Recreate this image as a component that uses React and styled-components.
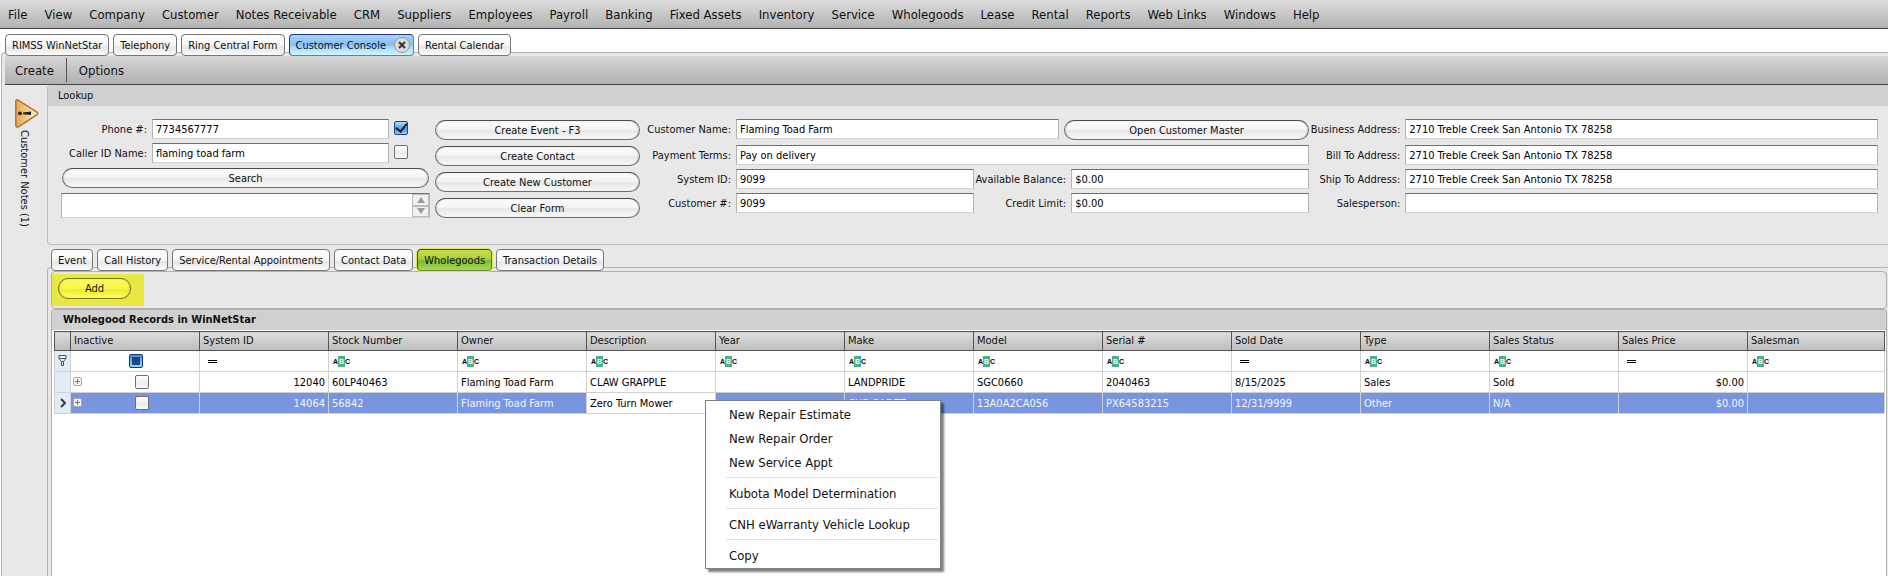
import React, { useEffect, useRef, useState } from "react";
import styled, { createGlobalStyle, css } from "styled-components";

const MENU = [
  "File",
  "View",
  "Company",
  "Customer",
  "Notes Receivable",
  "CRM",
  "Suppliers",
  "Employees",
  "Payroll",
  "Banking",
  "Fixed Assets",
  "Inventory",
  "Service",
  "Wholegoods",
  "Lease",
  "Rental",
  "Reports",
  "Web Links",
  "Windows",
  "Help",
];

const WINDOW_TABS = [
  "RIMSS WinNetStar",
  "Telephony",
  "Ring Central Form",
  "Customer Console",
  "Rental Calendar",
];

const DETAIL_TABS = [
  "Event",
  "Call History",
  "Service/Rental Appointments",
  "Contact Data",
  "Wholegoods",
  "Transaction Details",
];

const COLUMNS = [
  { key: "systemId", title: "System ID", filter: "equals", align: "right" },
  { key: "stock", title: "Stock Number", filter: "text" },
  { key: "owner", title: "Owner", filter: "text" },
  { key: "description", title: "Description", filter: "text" },
  { key: "year", title: "Year", filter: "text" },
  { key: "make", title: "Make", filter: "text" },
  { key: "model", title: "Model", filter: "text" },
  { key: "serial", title: "Serial #", filter: "text" },
  { key: "sold", title: "Sold Date", filter: "equals" },
  { key: "type", title: "Type", filter: "text" },
  { key: "status", title: "Sales Status", filter: "text" },
  { key: "price", title: "Sales Price", filter: "equals", align: "right" },
  { key: "salesman", title: "Salesman", filter: "text" },
];

const ROWS = [
  {
    systemId: "12040",
    stock: "60LP40463",
    owner: "Flaming Toad Farm",
    description: "CLAW GRAPPLE",
    make: "LANDPRIDE",
    model: "SGC0660",
    serial: "2040463",
    sold: "8/15/2025",
    type: "Sales",
    status: "Sold",
    price: "$0.00",
  },
  {
    systemId: "14064",
    stock: "56842",
    owner: "Flaming Toad Farm",
    description: "Zero Turn Mower",
    make: "CUB CADET",
    model: "13A0A2CA056",
    serial: "PX64583215",
    sold: "12/31/9999",
    type: "Other",
    status: "N/A",
    price: "$0.00",
  },
];

const CONTEXT_MENU = [
  ["New Repair Estimate", "New Repair Order", "New Service Appt"],
  ["Kubota Model Determination"],
  ["CNH eWarranty Vehicle Lookup"],
  ["Copy"],
];

const ADDRESS = "2710 Treble Creek San Antonio TX 78258";

const TextField = ({ id, label, value, wide, grow }) => (
  <>
    <Label htmlFor={id} $wide={wide}>
      {label}
    </Label>
    <Input id={id} type="text" defaultValue={value} $grow={grow} />
  </>
);

const FilterIcon = ({ kind }) =>
  kind === "text" ? (
    <TextFilter>
      A<b>B</b>C
    </TextFilter>
  ) : (
    <EqualsFilter viewBox="0 0 9 3">
      <path d="M0 .5h9M0 2.5h9" stroke="#000" />
    </EqualsFilter>
  );

const Expander = () => (
  <ExpandButton aria-label="Expand row">
    <svg width="9" height="9" viewBox="0 0 9 9">
      <rect x=".5" y=".5" width="8" height="8" rx="1.5" fill="#f4f4f4" stroke="#a8a8a8" />
      <path d="M2 4.5h5M4.5 2v5" stroke="#777" />
    </svg>
  </ExpandButton>
);

const NotesIcon = () => (
  <svg width="25" height="31" viewBox="0 0 25 31">
    <defs>
      <linearGradient id="warn" x1="0" x2="1" y1="0" y2="0">
        <stop offset="0" stopColor="#e9a64b" />
        <stop offset="0.55" stopColor="#f7ce8d" />
        <stop offset="1" stopColor="#fdf0d8" />
      </linearGradient>
    </defs>
    <path
      d="M1.8 3.4Q2 1 4 2.2L23 14Q24.4 15.3 23 16.6L4.4 28.8Q2.2 29.8 1.8 27.4Z"
      fill="url(#warn)"
      stroke="#a9763f"
      strokeWidth="1.5"
    />
    <circle cx="6" cy="15.3" r="1.9" fill="#1c2433" />
    <path d="M9 14.4L17 13.5V17.1L9 16.2Z" fill="#1c2433" />
  </svg>
);

const App = () => {
  const [windowTab, setWindowTab] = useState("Customer Console");
  const [detailTab, setDetailTab] = useState("Wholegoods");
  const inactiveFilter = useRef(null);

  useEffect(() => {
    inactiveFilter.current.indeterminate = true;
  }, []);

  return (
    <Page>
      <GlobalStyle />
      <MenuBar>
        {MENU.map((item) => (
          <MenuButton key={item}>{item}</MenuButton>
        ))}
      </MenuBar>
      <WindowTabs>
        {WINDOW_TABS.map((tab) => (
          <Tab key={tab} $tone={tab === windowTab ? "blue" : ""} onClick={() => setWindowTab(tab)}>
            {tab}
            {tab === windowTab && (
              <CloseIcon viewBox="0 0 16 16">
                <circle cx="8" cy="8" r="7.5" fill="#dcdcdc" stroke="#9a9a9a" />
                <path d="M5 5l6 6M11 5l-6 6" stroke="#3c3c3c" strokeWidth="2.2" />
              </CloseIcon>
            )}
          </Tab>
        ))}
      </WindowTabs>
      <WindowPanel>
        <Toolbar>
          <ToolButton>Create</ToolButton>
          <ToolButton>Options</ToolButton>
        </Toolbar>
        <Workspace>
          <Rail>
            <RailButton>
              <NotesIcon />
              <span>Customer Notes (1)</span>
            </RailButton>
          </Rail>
          <Content>
            <Lookup>
              <LookupTitle>Lookup</LookupTitle>
              <Form onSubmit={(e) => e.preventDefault()}>
                <Group>
                  <Row>
                    <TextField id="phone" label="Phone #:" value="7734567777" />
                    <Check aria-label="Use phone" defaultChecked />
                  </Row>
                  <Row>
                    <TextField id="caller" label="Caller ID Name:" value="flaming toad farm" />
                    <Check aria-label="Use caller ID" />
                  </Row>
                  <SearchRow>
                    <PillButton type="button">Search</PillButton>
                  </SearchRow>
                  <ResultBox>
                    <ResultText aria-label="Search results" />
                    <Spinner>
                      <SpinButton type="button" aria-label="Scroll up">
                        <svg width="8" height="6" viewBox="0 0 8 6">
                          <path d="M0 6L4 0L8 6Z" fill="#999" />
                        </svg>
                      </SpinButton>
                      <SpinButton type="button" aria-label="Scroll down">
                        <svg width="8" height="6" viewBox="0 0 8 6">
                          <path d="M0 0L4 6L8 0Z" fill="#999" />
                        </svg>
                      </SpinButton>
                    </Spinner>
                  </ResultBox>
                </Group>
                <Actions>
                  <PillButton type="button">Create Event - F3</PillButton>
                  <PillButton type="button">Create Contact</PillButton>
                  <PillButton type="button">Create New Customer</PillButton>
                  <PillButton type="button">Clear Form</PillButton>
                </Actions>
                <Group>
                  <Row $first>
                    <TextField id="name" label="Customer Name:" value="Flaming Toad Farm" grow={321} />
                    <MasterButton type="button">Open Customer Master</MasterButton>
                  </Row>
                  <Row>
                    <TextField id="terms" label="Payment Terms:" value="Pay on delivery" />
                  </Row>
                  <Row>
                    <TextField id="system" label="System ID:" value="9099" />
                    <TextField id="balance" label="Available Balance:" value="$0.00" wide />
                  </Row>
                  <Row>
                    <TextField id="customer" label="Customer #:" value="9099" />
                    <TextField id="credit" label="Credit Limit:" value="$0.00" wide />
                  </Row>
                </Group>
                <Group>
                  <Row $first>
                    <TextField id="business" label="Business Address:" value={ADDRESS} />
                  </Row>
                  <Row>
                    <TextField id="bill" label="Bill To Address:" value={ADDRESS} />
                  </Row>
                  <Row>
                    <TextField id="ship" label="Ship To Address:" value={ADDRESS} />
                  </Row>
                  <Row>
                    <TextField id="sales" label="Salesperson:" value="" />
                  </Row>
                </Group>
              </Form>
            </Lookup>
            <DetailTabs>
              {DETAIL_TABS.map((tab) => (
                <Tab
                  key={tab}
                  $tone={tab === detailTab ? "green" : ""}
                  onClick={() => setDetailTab(tab)}
                >
                  {tab}
                </Tab>
              ))}
            </DetailTabs>
            <DetailPane>
              <AddBar>
                <Highlight>
                  <AddButton>Add</AddButton>
                </Highlight>
              </AddBar>
              <Records>
                <RecordsTitle>Wholegood Records in WinNetStar</RecordsTitle>
                <GridArea>
                  <Table>
                    <colgroup>
                      <IndicatorCol />
                      <InactiveCol />
                      {COLUMNS.map((col) => (
                        <DataCol key={col.key} $last={col.key === "salesman"} />
                      ))}
                    </colgroup>
                    <thead>
                      <tr>
                        <Th aria-label="Row state" />
                        <Th>Inactive</Th>
                        {COLUMNS.map((col) => (
                          <Th key={col.key}>{col.title}</Th>
                        ))}
                      </tr>
                    </thead>
                    <tbody>
                      <tr>
                        <Indicator>
                          <svg width="9" height="12" viewBox="0 0 9 12">
                            <path
                              d="M1 .5h7v3L5.5 6.500v4h-2v-4L1 3.500ZM1 3.500h7M3.500 6.500h2"
                              fill="none"
                              stroke="#555"
                            />
                          </svg>
                        </Indicator>
                        <CheckCell>
                          <div>
                            <Check ref={inactiveFilter} aria-label="Filter inactive" />
                          </div>
                        </CheckCell>
                        {COLUMNS.map((col) => (
                          <Td key={col.key}>
                            <FilterIcon kind={col.filter} />
                          </Td>
                        ))}
                      </tr>
                      {ROWS.map((row, i) => {
                        const selected = i === 1;
                        return (
                          <tr key={row.systemId}>
                            <Indicator>
                              {selected && (
                                <svg width="6" height="10" viewBox="0 0 6 10">
                                  <path d="M1 1l4 4-4 4" fill="none" stroke="#333b4d" strokeWidth="2" />
                                </svg>
                              )}
                            </Indicator>
                            <CheckCell $selected={selected}>
                              <Expander />
                              <div>
                                <Check aria-label={"Inactive " + row.systemId} />
                              </div>
                            </CheckCell>
                            {COLUMNS.map((col) => (
                              <Td
                                key={col.key}
                                $align={col.align}
                                $selected={selected && col.key !== "description"}
                              >
                                {row[col.key]}
                              </Td>
                            ))}
                          </tr>
                        );
                      })}
                    </tbody>
                  </Table>
                  <ContextMenu>
                    {CONTEXT_MENU.map((group) => (
                      <MenuGroup key={group[0]}>
                        {group.map((item) => (
                          <ContextItem key={item}>{item}</ContextItem>
                        ))}
                      </MenuGroup>
                    ))}
                  </ContextMenu>
                </GridArea>
              </Records>
            </DetailPane>
          </Content>
        </Workspace>
      </WindowPanel>
    </Page>
  );
};

export default App;

const GlobalStyle = createGlobalStyle`
  * {
    box-sizing: border-box;
  }
  body {
    margin: 0;
    background: #fff;
  }
  body, button, input, textarea {
    color: #111;
    font-family: "DejaVu Sans Condensed", "DejaVu Sans", sans-serif;
    font-size: 11px;
  }
  button {
    padding: 0;
    border: 0;
    background: none;
  }
  svg {
    display: block;
    flex: none;
  }
`;

const Page = styled.div`
  display: flex;
  flex-direction: column;
  min-height: 100vh;
`;

const MenuBar = styled.nav`
  display: flex;
  gap: 17px;
  height: 29px;
  padding: 0 8px;
  border-bottom: 1px solid #444;
  background: linear-gradient(#dcdcdc, #b2b2b2);
`;

const MenuButton = styled.button`
  font-size: 13px;
  white-space: nowrap;
`;

const WindowTabs = styled.div`
  position: relative;
  z-index: 1;
  display: flex;
  gap: 4px;
  margin-bottom: -4px;
  padding: 5px 5px 0;
`;

const tones = {
  blue: css`
    border-color: #20368f #5a7fb8 #5a7fb8 #20368f;
    background: linear-gradient(#a9d2fb, #84bdf8 50%, #a5d8ff 60%, #cdf6ff);
  `,
  green: css`
    border-color: #2d4a18 #4c7a2a #6d8b3a #2d4a18;
    outline: 1px solid #e6e63c;
    background: linear-gradient(#c5e04c, #a9d13c 45%, #7cb834 55%, #a8dc50);
  `,
};

const Tab = styled.button`
  display: flex;
  align-items: center;
  gap: 8px;
  height: 22px;
  padding: 0 ${(p) => (p.$tone === "blue" ? 3 : 6)}px 0 6px;
  border: 1px solid #777;
  border-radius: 4px;
  background: linear-gradient(#fdfdfd, #f7f7f7 50%, #e6e6e6 60%, #fafafa);
  white-space: nowrap;
  ${(p) => tones[p.$tone]}
`;

const CloseIcon = styled.svg`
  width: 16px;
  height: 16px;
`;

const WindowPanel = styled.div`
  display: flex;
  flex: 1;
  flex-direction: column;
  margin-left: 1px;
  padding: 3px 0 0 3px;
  border: solid #b4b4b4;
  border-width: 1px 0 0 1px;
  border-radius: 4px 0 0 0;
  background: #e8e8e8;
`;

const Toolbar = styled.div`
  display: flex;
  height: 29px;
  border-bottom: 1px solid #444;
  background: linear-gradient(#d6d6d6, #b0b0b0);
`;

const ToolButton = styled.button`
  padding: 0 12px 0 10px;
  font-size: 13px;

  & + & {
    margin: 2px 0;
    border-left: 1px solid #555;
    padding-left: 12px;
  }
`;

const Workspace = styled.div`
  display: flex;
  flex: 1;
`;

const Rail = styled.aside`
  width: 42px;
  padding: 13px 0 0 9px;
`;

const RailButton = styled.button`
  display: flex;
  flex-direction: column;
  align-items: flex-start;
  gap: 1px;

  span {
    margin-left: 4px;
    font-size: 11px;
    writing-mode: vertical-rl;
  }
`;

const Content = styled.main`
  display: flex;
  flex: 1;
  flex-direction: column;
  min-width: 0;
`;

const Lookup = styled.section`
  border: solid #bdbdbd;
  border-width: 0 0 1px 1px;
  border-radius: 4px 0 0 4px;
  overflow: hidden;
`;

const LookupTitle = styled.div`
  padding: 0 10px;
  background: #d0d0d0;
  line-height: 21px;
`;

const Form = styled.form`
  display: grid;
  grid-template-columns: 369px 215px 667fr 571fr;
  padding: 13px 10px 26px 13px;
`;

const Group = styled.div`
  min-width: 0;
`;

const Row = styled.div`
  display: flex;
  gap: 5px;
  height: 20px;
  margin-bottom: ${(p) => (p.$first ? 6 : 4)}px;
`;

const Label = styled.label`
  display: flex;
  flex: none;
  align-items: center;
  justify-content: flex-end;
  width: ${(p) => (p.$wide ? 87 : 86)}px;
  white-space: nowrap;

  ${Group}:last-child & {
    width: 91px;
  }
`;

const Input = styled.input`
  flex: ${(p) => p.$grow || 1} 1 0;
  width: 0;
  min-width: 0;
  height: 20px;
  padding: 0 3px;
  border: 1px solid;
  border-color: #707070 #b4b4b4 #d4d4d4 #b4b4b4;
  background: #fff;
  color: #000;
`;

const Check = styled.input.attrs({ type: "checkbox" })`
  appearance: none;
  flex: none;
  width: 14px;
  height: 14px;
  margin: 2px 22px 0 0;
  border: 1px solid #6e6e6e;
  border-radius: 2px;
  background: linear-gradient(#fff, #ececec 60%, #fafafa);

  &:checked {
    border-color: #1f3f96;
    background: linear-gradient(#b6d8fb, #4f94e8 60%, #8fd0fb);
  }
  &:checked::after {
    display: block;
    width: 5px;
    height: 9px;
    margin: -1px auto 0;
    border: solid #222;
    border-width: 0 2px 2px 0;
    content: "";
    rotate: 38deg;
  }
  &:indeterminate {
    border: 1px solid #16307c;
    background: linear-gradient(#1d3c78, #2a4c86) center / 8px 8px no-repeat,
      linear-gradient(#4a8ce0, #8fdcf8);
  }
  td & {
    margin: 0;
  }
`;

const PillButton = styled.button`
  height: 20px;
  border: 1px solid #707070;
  border-top-color: #4c4c4c;
  border-radius: 10px;
  background: linear-gradient(#fbfbfb, #f5f5f5 45%, #e7e7e7 55%, #fafafa);
  box-shadow: inset 1px 0 1px #d0d0d0, inset -1px 0 1px #d0d0d0;
`;

const SearchRow = styled.div`
  display: flex;
  margin: 5px 1px;

  button {
    flex: 1;
  }
`;

const ResultBox = styled.div`
  display: flex;
  height: 25px;
  border: 1px solid;
  border-color: #707070 #b4b4b4 #d4d4d4 #b4b4b4;
  background: #fff;
`;

const ResultText = styled.textarea`
  flex: 1;
  border: 0;
  background: transparent;
  resize: none;
`;

const Spinner = styled.div`
  display: flex;
  flex-direction: column;
  width: 17px;
`;

const SpinButton = styled.button`
  display: flex;
  flex: 1;
  align-items: center;
  justify-content: center;
  border: 1px solid #bcbcbc;
  background: #f0f0f0;
`;

const Actions = styled.div`
  display: flex;
  flex-direction: column;
  gap: 6px;
  padding: 1px 5px 0;
`;

const MasterButton = styled(PillButton)`
  flex: 248 1 0;
  margin-top: 1px;
`;

const DetailTabs = styled.div`
  position: relative;
  z-index: 1;
  display: flex;
  gap: 4px;
  margin-bottom: -4px;
  padding: 4px 4px 0;
`;

const DetailPane = styled.div`
  display: flex;
  flex: 1;
  flex-direction: column;
  padding: 3px 1px 0 3px;
  border: solid #b4b4b4;
  border-width: 1px 0 0 1px;
  border-radius: 4px 0 0 0;
`;

const AddBar = styled.div`
  padding: 2px 0;
  border: 1px solid #b0b0b0;
  border-radius: 4px;
`;

const Highlight = styled.div`
  width: 92px;
  padding: 4px 6px 7px;
  background: #e8e842;
`;

const AddButton = styled(PillButton)`
  width: 73px;
  height: 21px;
  border-color: #77771e;
  background: linear-gradient(#fbfb58, #f6f64c 50%, #ecec38 60%, #ffff60);
  box-shadow: inset 1px 0 1px #d8d83a, inset -1px 0 1px #d8d83a;
`;

const Records = styled.section`
  display: flex;
  flex: 1;
  flex-direction: column;
  border: solid #b0b0b0;
  border-width: 1px 1px 0;
  border-radius: 4px 4px 0 0;
  overflow: hidden;
`;

const RecordsTitle = styled.h2`
  margin: 0;
  padding: 0 11px;
  background: #d0d0d0;
  font-size: 11px;
  line-height: 20px;
`;

const GridArea = styled.div`
  position: relative;
  flex: 1;
  padding: 1px 1px 0 2px;
  background: #fff;
`;

const Table = styled.table`
  width: 100%;
  border-collapse: collapse;
  table-layout: fixed;
`;

const IndicatorCol = styled.col`
  width: 16px;
`;

const InactiveCol = styled.col`
  width: 129px;
`;

const DataCol = styled.col`
  width: ${(p) => (p.$last ? "auto" : "129px")};
`;

const Th = styled.th`
  height: 19px;
  padding: 0 3px 2px;
  border: 1px solid #555;
  background: linear-gradient(#dedede, #bcbcbc);
  font-weight: normal;
  text-align: left;
  white-space: nowrap;
`;

const Td = styled.td`
  height: 21px;
  padding: 0 3px;
  border: 1px solid #d0d0d0;
  background: ${(p) => (p.$selected ? "#7a95df" : "#fff")};
  color: ${(p) => (p.$selected ? "#f4f6fc" : "#000")};
  text-align: ${(p) => p.$align || "left"};
  white-space: nowrap;
`;

const Indicator = styled(Td)`
  padding: 0;
  background: #e4eaf6;

  svg {
    margin: 0 auto;
  }
`;

const CheckCell = styled(Td)`
  padding: 0 0 0 2px;

  > div {
    display: flex;
    justify-content: center;
  }
  > button + div {
    margin-left: 12px;
  }
`;

const ExpandButton = styled.button`
  float: left;
  padding-top: 2px;
`;

const TextFilter = styled.span`
  display: flex;
  align-items: center;
  padding-left: 1px;
  font-family: "Liberation Sans", sans-serif;
  font-size: 7px;
  font-weight: bold;

  b {
    width: 7px;
    background: #4caf8a;
    color: #fff;
    line-height: 11px;
    text-align: center;
  }
`;

const EqualsFilter = styled.svg`
  width: 9px;
  height: 3px;
  margin-left: 5px;
`;

const ContextMenu = styled.div`
  position: absolute;
  top: 70px;
  left: 653px;
  width: 236px;
  padding: 2px 2px 0 20px;
  border: 1px solid #808080;
  background: #fff;
  box-shadow: 3px 3px 2px rgba(0, 0, 0, 0.5);
`;

const MenuGroup = styled.div`
  display: flex;
  flex-direction: column;

  & + & {
    margin-top: 2px;
    border-top: 1px solid #e2e2e2;
    padding-top: 4px;
  }
`;

const ContextItem = styled.button`
  padding: 0 3px;
  font-size: 13px;
  line-height: 24px;
  text-align: left;
`;
